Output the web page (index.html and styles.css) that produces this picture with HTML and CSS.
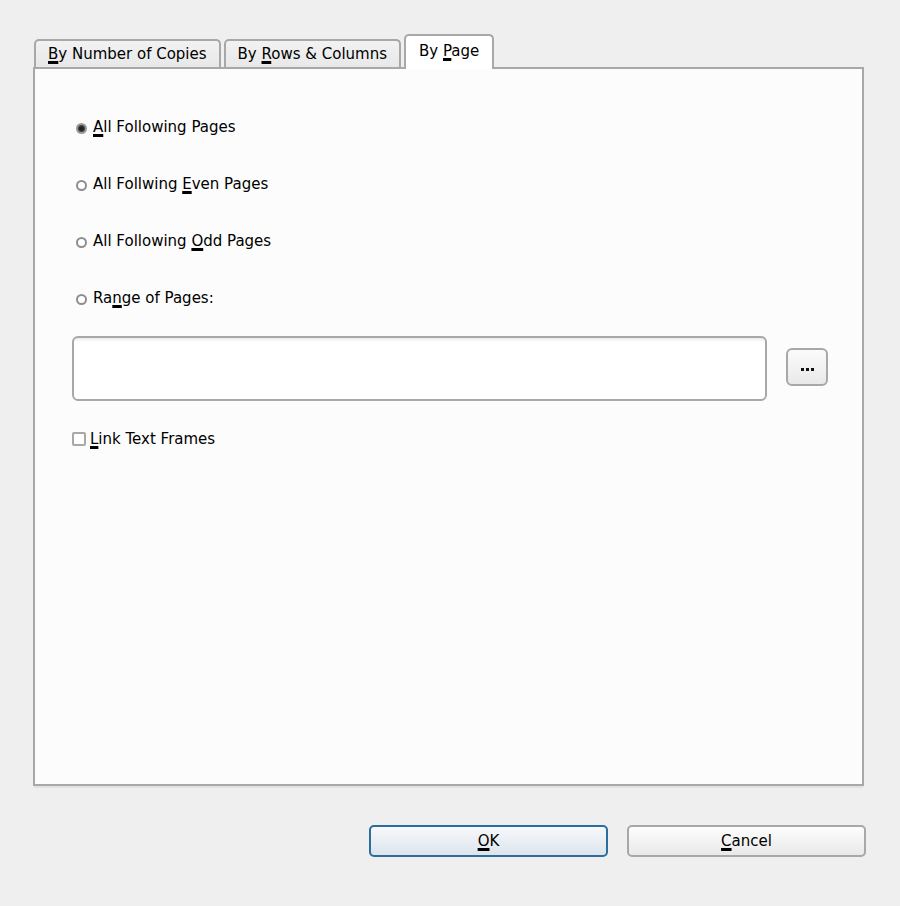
FILE: index.html
```html
<!DOCTYPE html>
<html lang="en">
<head>
  <meta charset="utf-8">
  <title>Paste Options</title>
  <link rel="stylesheet" href="styles.css">
</head>
<body>
  <div class="dialog">
    <div class="tabs">
      <div class="tab"><span class="mn">B</span>y Number of Copies</div>
      <div class="tab">By <span class="mn">R</span>ows &amp; Columns</div>
      <div class="tab tab-active">By <span class="mn">P</span>age</div>
    </div>

    <div class="panel">
      <div class="option-list">
        <label class="option">
          <span class="radio radio-checked"></span>
          <span><span class="mn">A</span>ll Following Pages</span>
        </label>
        <label class="option">
          <span class="radio"></span>
          <span>All Follwing <span class="mn">E</span>ven Pages</span>
        </label>
        <label class="option">
          <span class="radio"></span>
          <span>All Following <span class="mn">O</span>dd Pages</span>
        </label>
        <label class="option">
          <span class="radio"></span>
          <span>Ra<span class="mn">n</span>ge of Pages:</span>
        </label>
      </div>

      <div class="range-row">
        <div class="range-input"></div>
        <button class="btn-more"><span class="dot"></span><span class="dot"></span><span class="dot"></span></button>
      </div>

      <label class="check-row">
        <span class="checkbox"></span>
        <span><span class="mn">L</span>ink Text Frames</span>
      </label>
    </div>

    <div class="button-group">
      <button class="btn btn-default"><span class="mn">O</span>K</button>
      <button class="btn"><span class="mn">C</span>ancel</button>
    </div>
  </div>
</body>
</html>
```

FILE: styles.css
```css
body {
  margin: 0;
  background: #efefef;
  font-family: 'DejaVu Sans', 'Liberation Sans', sans-serif;
  font-size: 15px;
  color: #000;
}

.dialog {
  width: 831px;
  padding: 34px 0 0 33px;
}

.mn {
  text-decoration: underline;
  text-decoration-thickness: 3px;
  text-underline-offset: 2px;
  text-decoration-skip-ink: none;
}

.tabs {
  display: flex;
  align-items: flex-end;
  gap: 3px;
  margin-left: 1px;
  margin-bottom: -2px;
  position: relative;
  z-index: 1;
}

.tab {
  height: 26px;
  line-height: 26px;
  padding: 0 12px;
  border: 2px solid #a8a8a8;
  border-bottom: none;
  border-radius: 5px 5px 0 0;
  background: linear-gradient(#f2f2f2, #e8e8e8);
  margin-bottom: 2px;
}

.tab-active {
  height: 33px;
  line-height: 30px;
  padding: 0 13px;
  margin-bottom: 0;
  background: #fff;
}

.panel {
  height: 715px;
  border: 2px solid #a8a8a8;
  background: #fcfcfc;
  box-shadow: 0 3px 0 -1px #e2e2e2;
  padding: 0 0 0 37px;
}

.option-list {
  padding: 49px 0 0 4px;
}

.option {
  display: flex;
  align-items: center;
  gap: 6px;
  height: 18px;
  margin-bottom: 39px;
}

.radio {
  width: 7px;
  height: 7px;
  border: 2px solid #8e8e8e;
  border-radius: 50%;
  background: #fff;
  margin-top: 2px;
}

.radio-checked {
  border-color: #999;
  background: radial-gradient(circle, #1a1a1a 0, #2e2e2e 45%, #707070 100%);
}

.range-row {
  display: flex;
  align-items: center;
  gap: 19px;
  margin-top: -10px;
}

.range-input {
  width: 691px;
  height: 61px;
  border: 2px solid #a8a8a8;
  border-radius: 6px;
  background: linear-gradient(#ececec 0, #fff 4px);
}

.btn-more {
  display: flex;
  align-items: center;
  justify-content: center;
  gap: 2px;
  width: 42px;
  height: 38px;
  margin-top: -3px;
  padding: 4px 0 0;
  border: 2px solid #a8a8a8;
  border-radius: 6px;
  background: linear-gradient(#fbfbfb, #e9e9e9);
}

.dot {
  width: 3px;
  height: 3px;
  background: #111;
}

.check-row {
  display: flex;
  align-items: center;
  gap: 4px;
  height: 18px;
  margin-top: 29px;
}

.checkbox {
  width: 10px;
  height: 10px;
  border: 2px solid #a8a8a8;
  border-radius: 2px;
  background: #fff;
}

.button-group {
  display: flex;
  justify-content: flex-end;
  gap: 19px;
  margin-top: 39px;
  margin-right: -2px;
}

.btn {
  width: 239px;
  height: 32px;
  border: 2px solid #a8a8a8;
  border-radius: 5px;
  background: linear-gradient(#fdfdfd, #e9e9e9);
  font-family: 'DejaVu Sans', sans-serif;
  font-size: 15px;
  color: #000;
  padding: 0;
}

.btn-default {
  border-color: #2b6d9c;
  background: linear-gradient(#f7f9fb, #dce4ec);
}
```
